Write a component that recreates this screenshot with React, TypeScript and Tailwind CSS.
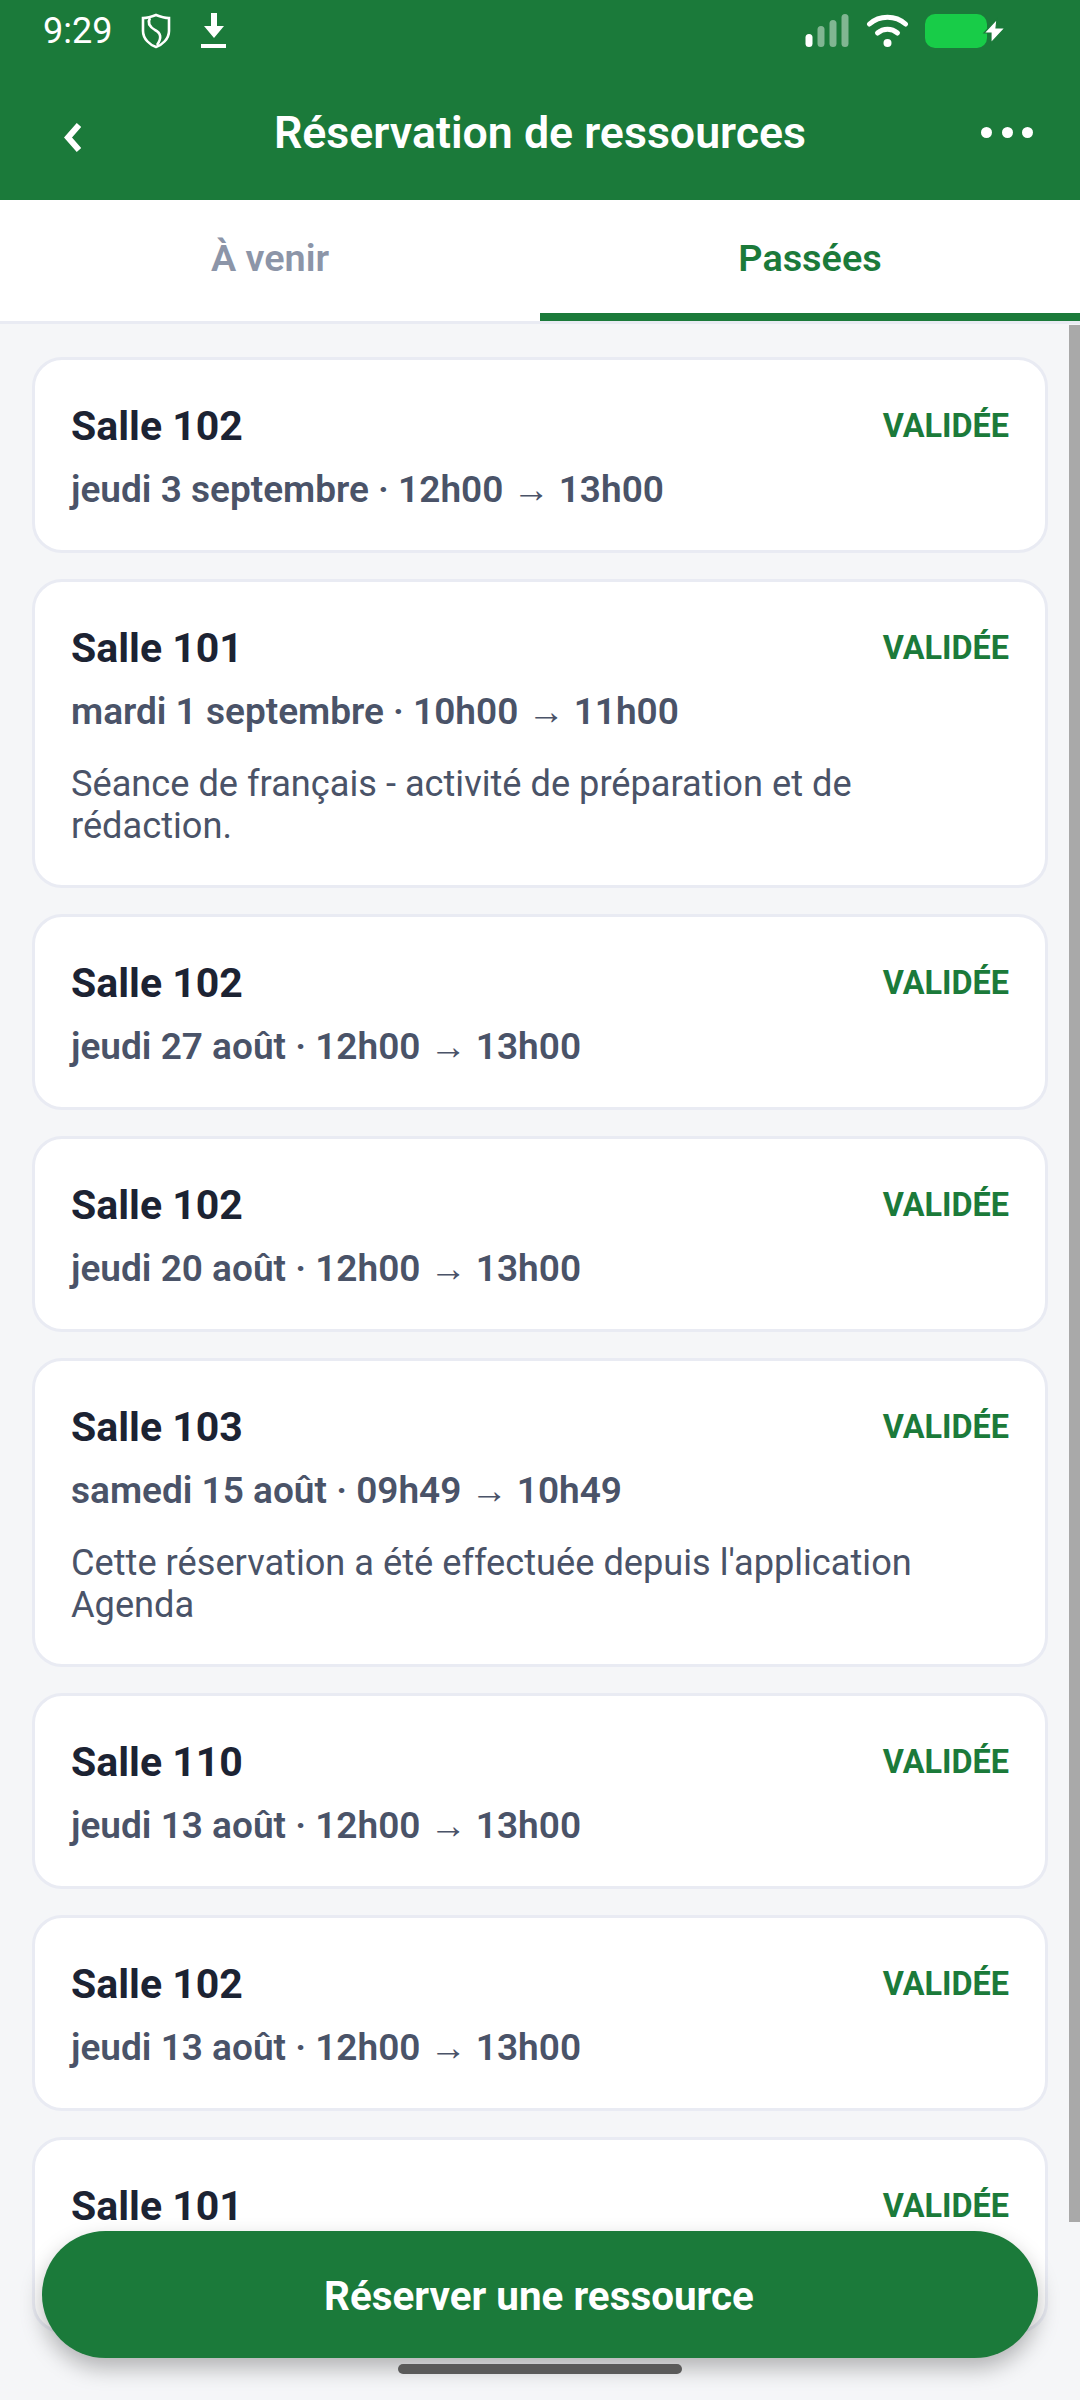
import React from "react";

type Item = { room: string; date?: string; from?: string; to?: string; note?: string };

const items: Item[] = [
  { room: "Salle 102", date: "jeudi 3 septembre", from: "12h00", to: "13h00" },
  { room: "Salle 101", date: "mardi 1 septembre", from: "10h00", to: "11h00", note: "Séance de français - activité de préparation et de rédaction." },
  { room: "Salle 102", date: "jeudi 27 août", from: "12h00", to: "13h00" },
  { room: "Salle 102", date: "jeudi 20 août", from: "12h00", to: "13h00" },
  { room: "Salle 103", date: "samedi 15 août", from: "09h49", to: "10h49", note: "Cette réservation a été effectuée depuis l'application Agenda" },
  { room: "Salle 110", date: "jeudi 13 août", from: "12h00", to: "13h00" },
  { room: "Salle 102", date: "jeudi 13 août", from: "12h00", to: "13h00" },
  { room: "Salle 101" },
];

function Card({ item }: { item: Item }) {
  return (
    <div className="rounded-[30px] border-[3px] border-[#e9ebf3] bg-white pl-[36px] pr-[36px] pt-[40px] pb-[34px]">
      <div className="flex items-start justify-between">
        <div className="text-[41px] leading-[52px] font-bold text-[#1c2333]">{item.room}</div>
        <div className="text-[32.4px] leading-[52px] font-bold text-[#1b7a3a]">VALIDÉE</div>
      </div>
      <div className="mt-[12px] h-[52px] text-[37px] leading-[52px] font-semibold text-[#4a5368] whitespace-nowrap">
        {item.date ? `${item.date} · ${item.from} → ${item.to}` : ""}
      </div>
      {item.note && (
        <div className="mt-[25px] mb-[4px] pr-[20px] text-[36.2px] leading-[42px] text-[#4a5368]">{item.note}</div>
      )}
    </div>
  );
}

export default function App() {
  return (
    <div className="relative h-[2400px] w-[1080px] overflow-hidden bg-[#f5f6f8] font-['Roboto',sans-serif]">
      <header className="h-[200px] bg-[#1b7a3a] text-white">
        <div className="flex h-[62px] items-center justify-between pl-[43px] pr-[93px]">
          <div className="flex items-center">
            <span className="w-[66px] text-[36px] leading-[62px]">9:29</span>
            <svg className="ml-[32px]" width="30" height="36" viewBox="0 0 30 36" fill="none" stroke="white" strokeWidth="2.6">
              <path d="M15 2 C20 4 24 5 28 5 L28 18 C28 26 21 32 15 34 C9 32 2 26 2 18 L2 5 C6 5 10 4 15 2 Z" />
              <path d="M9 5 C6 10 9 14 14 17 C20 20 21 25 16 32" />
            </svg>
            <svg className="ml-[30px]" width="26" height="36" viewBox="0 0 26 36" fill="white">
              <path d="M10 0h6v13h7L13 25 3 13h7z" />
              <rect x="0" y="31" width="25" height="4" />
            </svg>
          </div>
          <div className="flex items-center">
            <svg width="45" height="34" viewBox="0 0 45 34">
              <rect x="0.5" y="20" width="7" height="13" rx="3.5" fill="white" />
              <rect x="12.5" y="12" width="7" height="21" rx="3.5" fill="white" opacity="0.45" />
              <rect x="24.5" y="6" width="7" height="27" rx="3.5" fill="white" opacity="0.45" />
              <rect x="36.5" y="0" width="7" height="33" rx="3.5" fill="white" opacity="0.45" />
            </svg>
            <svg className="ml-[16px]" width="43" height="34" viewBox="0 0 42 34" fill="none" stroke="white" strokeWidth="5" strokeLinecap="round">
              <path d="M3 10 C13 1 29 1 39 10" />
              <path d="M11 19 C17 14 25 14 31 19" />
              <circle cx="21" cy="29" r="4" fill="white" stroke="none" />
            </svg>
            <div className="relative ml-[16px] h-[34px] w-[62px] rounded-[10px] bg-[#18cc48]">
              <svg className="absolute left-[56px] top-[3px]" width="26" height="28" viewBox="0 0 26 28">
                <path d="M16 2 L3 16 L10 16 L10 26 L24 11 L15 11 Z" fill="white" stroke="#1b7a3a" strokeWidth="1.2" />
              </svg>
            </div>
          </div>
        </div>
        <div className="flex h-[138px] items-start justify-between pl-[64px] pr-[47px]">
          <svg className="mt-[61px]" width="17" height="29" viewBox="0 0 17 29" fill="none" stroke="white" strokeWidth="6">
            <path d="M15 2 L4 14.5 L15 27" />
          </svg>
          <div className="mt-[46px] flex-1 pl-[18px] text-center text-[44.7px] leading-[50px] font-semibold">Réservation de ressources</div>
          <div className="mt-[65px] flex gap-[9.5px]">
            <span className="h-[11px] w-[11px] rounded-full bg-white" />
            <span className="h-[11px] w-[11px] rounded-full bg-white" />
            <span className="h-[11px] w-[11px] rounded-full bg-white" />
          </div>
        </div>
      </header>

      <nav className="flex h-[124px] border-b-[3px] border-[#e9ebf3] bg-white">
        <div className="flex flex-1 items-center justify-center pb-[5px] text-[37.8px] font-semibold text-[#8c95a8]">À venir</div>
        <div className="flex flex-1 items-center justify-center border-b-[8px] border-[#1b7a3a] pt-[3px] text-[37.8px] font-semibold text-[#1b7a3a]">Passées</div>
      </nav>

      <main className="flex flex-col gap-[26px] pl-[32px] pr-[32px] pt-[33px]">
        {items.map((item, i) => (
          <Card key={i} item={item} />
        ))}
      </main>

      <div className="absolute right-0 top-[325px] h-[1897px] w-[11px] bg-[#a9a9a9]" />
      <button className="absolute left-[42px] top-[2231px] flex h-[127px] w-[996px] items-center justify-center rounded-[64px] bg-[#1b7a3a] pt-[5px] pr-[2px] text-[40.4px] font-bold text-white shadow-[0_10px_22px_rgba(0,0,0,0.28)]">
        Réserver une ressource
      </button>
      <div className="absolute left-[398px] top-[2364px] h-[10px] w-[284px] rounded-full bg-[#5a5a5a]" />
    </div>
  );
}
